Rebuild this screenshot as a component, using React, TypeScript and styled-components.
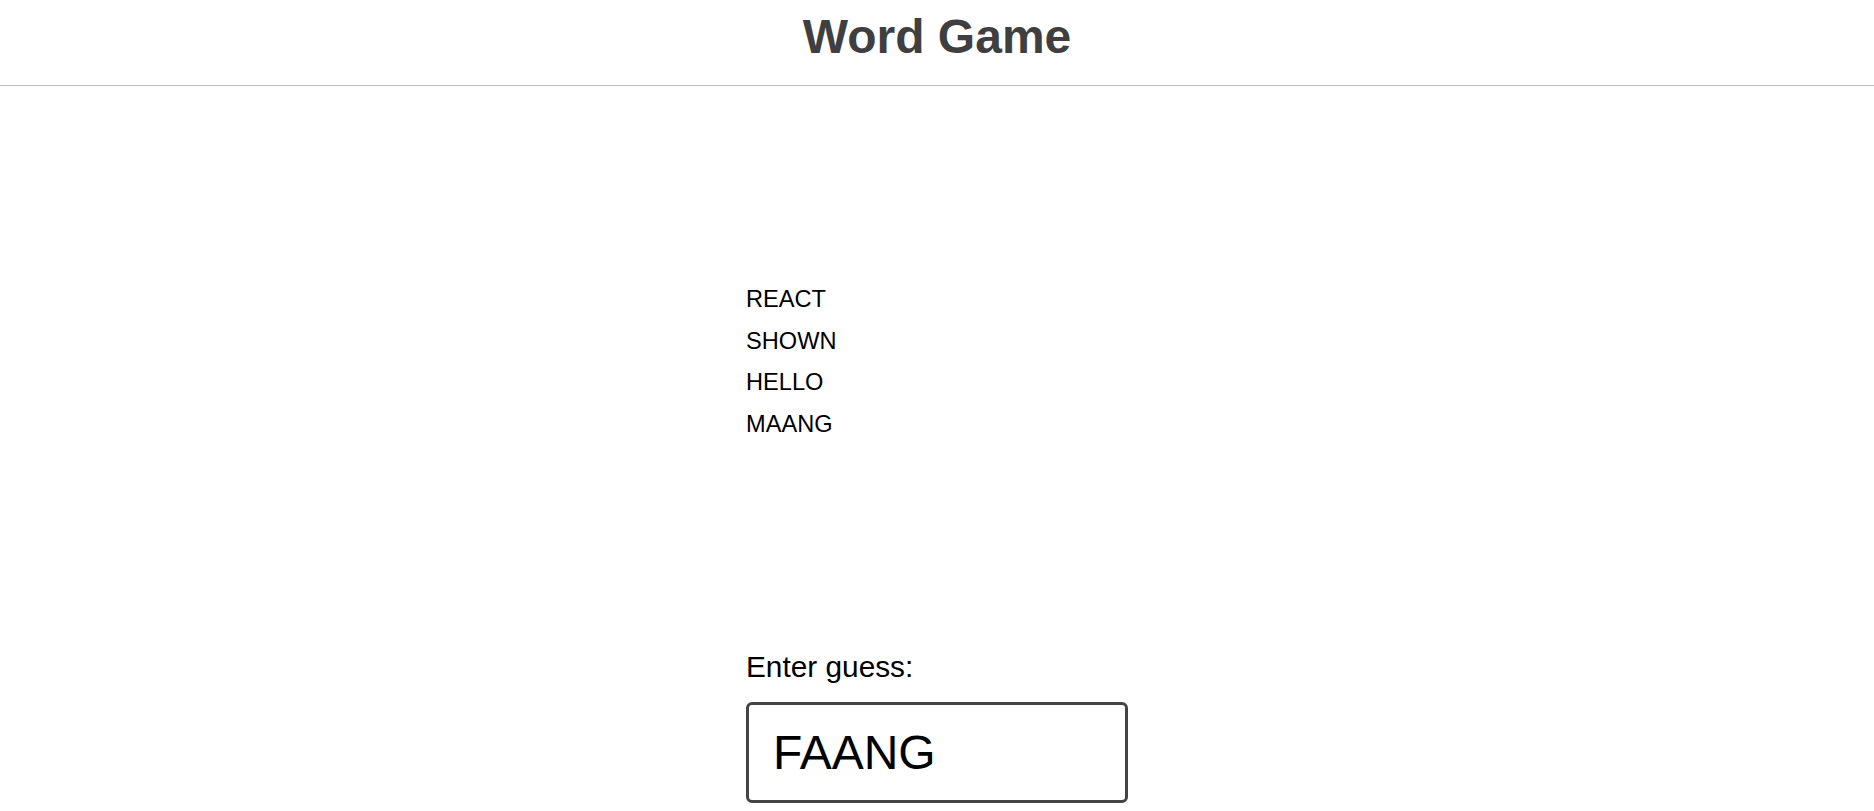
import styled, { createGlobalStyle } from 'styled-components';

const GlobalStyle = createGlobalStyle`
  html, body {
    margin: 0;
    padding: 0;
    background: #fff;
  }

  body {
    font-family: 'Liberation Sans', Arial, sans-serif;
    color: #000;
  }
`;

const StyledHeader = styled.header`
  padding: 10px 0 21px;
  border-bottom: 1px solid #bdbdbd;
  text-align: center;

  h1 {
    margin: 0;
    font-size: 48px;
    font-weight: 700;
    line-height: 54px;
    color: #3f3f3f;
  }
`;

const Main = styled.main`
  width: 382px;
  margin: 0 auto;
`;

const GuessList = styled.div`
  margin-top: 193px;
  display: flex;
  flex-direction: column;
`;

const Guess = styled.p`
  margin: 0;
  font-size: 23.6px;
  line-height: 41.7px;
`;

const GuessForm = styled.form`
  margin-top: 204px;
  display: flex;
  flex-direction: column;
  gap: 18px;

  label {
    font-size: 29.8px;
    line-height: 34px;
  }

  input {
    box-sizing: border-box;
    width: 100%;
    padding: 20px 24px;
    border: 3px solid #444;
    border-radius: 6px;
    font-family: inherit;
    font-size: 48px;
    line-height: 55px;
    color: #000;
    outline: none;
  }
`;

const guesses = ['REACT', 'SHOWN', 'HELLO', 'MAANG'];

const App = () => {
  return (
    <>
      <GlobalStyle />
      <StyledHeader>
        <h1>Word Game</h1>
      </StyledHeader>
      <Main>
        <GuessList>
          {guesses.map((word) => (
            <Guess key={word}>{word}</Guess>
          ))}
        </GuessList>
        <GuessForm onSubmit={(e) => e.preventDefault()}>
          <label htmlFor="guess-input">Enter guess:</label>
          <input id="guess-input" type="text" defaultValue="FAANG" />
        </GuessForm>
      </Main>
    </>
  );
};

export default App;
